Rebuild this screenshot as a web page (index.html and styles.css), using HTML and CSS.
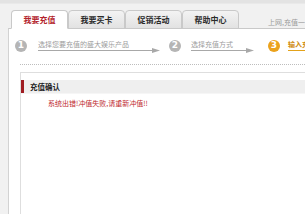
FILE: index.html
```html
<!DOCTYPE html>
<html lang="zh">
<head>
<meta charset="utf-8">
<title>我要充值</title>
<link rel="stylesheet" href="styles.css">
</head>
<body>
<div class="page">
  <div class="topband"></div>
  <div class="tabbar">
    <div class="tab active">我要充值</div>
    <div class="tab">我要买卡</div>
    <div class="tab">促销活动</div>
    <div class="tab">帮助中心</div>
    <div class="tabnote">上网,充值一卡通</div>
  </div>
  <div class="panel">
    <div class="steps">
      <div class="step done">
        <span class="num">1</span>
        <div class="label l1">
          <span class="ltext">选择您要充值的盛大娱乐产品</span>
          <svg class="arrow" viewBox="0 0 122 5" preserveAspectRatio="none"><line x1="0" y1="2.5" x2="117" y2="2.5" stroke="#a8a8a8" stroke-width="1"/><polygon points="114,0 122,2.5 114,5" fill="#a8a8a8"/></svg>
        </div>
      </div>
      <div class="step done">
        <span class="num">2</span>
        <div class="label l2">
          <span class="ltext">选择充值方式</span>
          <svg class="arrow" viewBox="0 0 63 5" preserveAspectRatio="none"><line x1="0" y1="2.5" x2="58" y2="2.5" stroke="#a8a8a8" stroke-width="1"/><polygon points="55,0 63,2.5 55,5" fill="#a8a8a8"/></svg>
        </div>
      </div>
      <div class="step current">
        <span class="num">3</span>
        <div class="label l3">
          <span class="ltext">输入充值信息</span>
          <svg class="arrow" viewBox="0 0 60 5" preserveAspectRatio="none"><line x1="0" y1="2.5" x2="60" y2="2.5" stroke="#e3a21a" stroke-width="1"/></svg>
        </div>
      </div>
    </div>
    <div class="dots"></div>
    <div class="box">
      <div class="boxhead"><span class="redbar"></span><span class="boxtitle">充值确认</span></div>
      <div class="msg">系统出错!冲值失败,请重新冲值!!</div>
    </div>
  </div>
</div>
</body>
</html>
```

FILE: styles.css
```css
html, body {
  margin: 0;
  padding: 0;
}
body {
  background: #f1f1f1;
  font-family: "Noto Sans CJK SC", "Noto Sans", sans-serif;
  width: 305px;
  height: 214px;
  overflow: hidden;
}
.page {
  display: flex;
  flex-direction: column;
  height: 214px;
}
.topband {
  height: 3px;
  background: #e3e3e3;
  border-bottom: 1px solid #e9e9e9;
}
.tabbar {
  display: flex;
  align-items: flex-end;
  padding-left: 11px;
  padding-top: 6px;
  height: 18px;
  position: relative;
  z-index: 1;
}
.tab {
  box-sizing: border-box;
  flex: none;
  width: 57px;
  height: 19px;
  margin-bottom: -1px;
  border: 1px solid #c9c9c9;
  border-radius: 4px 4px 0 0;
  background: linear-gradient(#f3f3f3, #e2e2e2);
  font-size: 8px;
  font-weight: bold;
  color: #2a2a2a;
  display: flex;
  align-items: center;
  justify-content: center;
  line-height: 1;
}
.tab.active {
  background: #fff;
  color: #b3242c;
  border-bottom-color: #fff;
}
.tabnote {
  flex: none;
  margin-left: 29px;
  margin-bottom: 2px;
  font-size: 7px;
  color: #9a9a9a;
  white-space: nowrap;
  line-height: 1;
}
.panel {
  flex: 1;
  margin-left: 8px;
  background: #fff;
  border-left: 1px solid #d2d2d2;
  border-top: 1px solid #c9c9c9;
  display: flex;
  flex-direction: column;
}
.steps {
  display: flex;
  align-items: center;
  padding-left: 6px;
  padding-top: 10px;
  height: 13px;
  white-space: nowrap;
}
.step {
  display: flex;
  align-items: center;
  flex: none;
}
.num {
  width: 12px;
  height: 12px;
  border-radius: 50%;
  background: #b5b5b5;
  color: #fff;
  font-size: 9px;
  font-weight: bold;
  font-family: "DejaVu Sans", sans-serif;
  display: flex;
  align-items: center;
  justify-content: center;
  line-height: 1;
  flex: none;
}
.current .num {
  background: #eba21c;
}
.label {
  display: flex;
  flex-direction: column;
  margin-left: 11px;
  padding-top: 2px;
  flex: none;
}
.ltext {
  font-size: 7px;
  line-height: 8px;
  color: #9c9c9c;
}
.current .ltext {
  color: #d08c10;
  font-weight: bold;
}
.arrow {
  display: block;
  width: 100%;
  height: 5px;
}
.l1 { width: 122px; margin-right: 9px; }
.l2 { width: 63px; margin-left: 10px; margin-right: 14px; }
.l3 { width: 60px; margin-left: 8px; }
.dots {
  margin-top: 12px;
  margin-left: 11px;
  border-top: 1px dotted #bdbdbd;
}
.box {
  flex: 1;
  margin-top: 7px;
  margin-left: 11px;
  margin-right: -20px;
  border: 1px solid #dedede;
  border-bottom: none;
  padding-top: 7px;
}
.boxhead {
  display: flex;
  align-items: center;
  height: 13px;
  background: #efefef;
  border-bottom: 1px solid #f6f6f6;
}
.redbar {
  width: 3px;
  height: 13px;
  background: #9f1c22;
}
.boxtitle {
  margin-left: 6px;
  font-size: 7.5px;
  font-weight: bold;
  color: #222;
  line-height: 1;
}
.msg {
  margin-top: 5px;
  margin-left: 27px;
  font-size: 7px;
  line-height: 9px;
  color: #c0282e;
  white-space: nowrap;
}
```
